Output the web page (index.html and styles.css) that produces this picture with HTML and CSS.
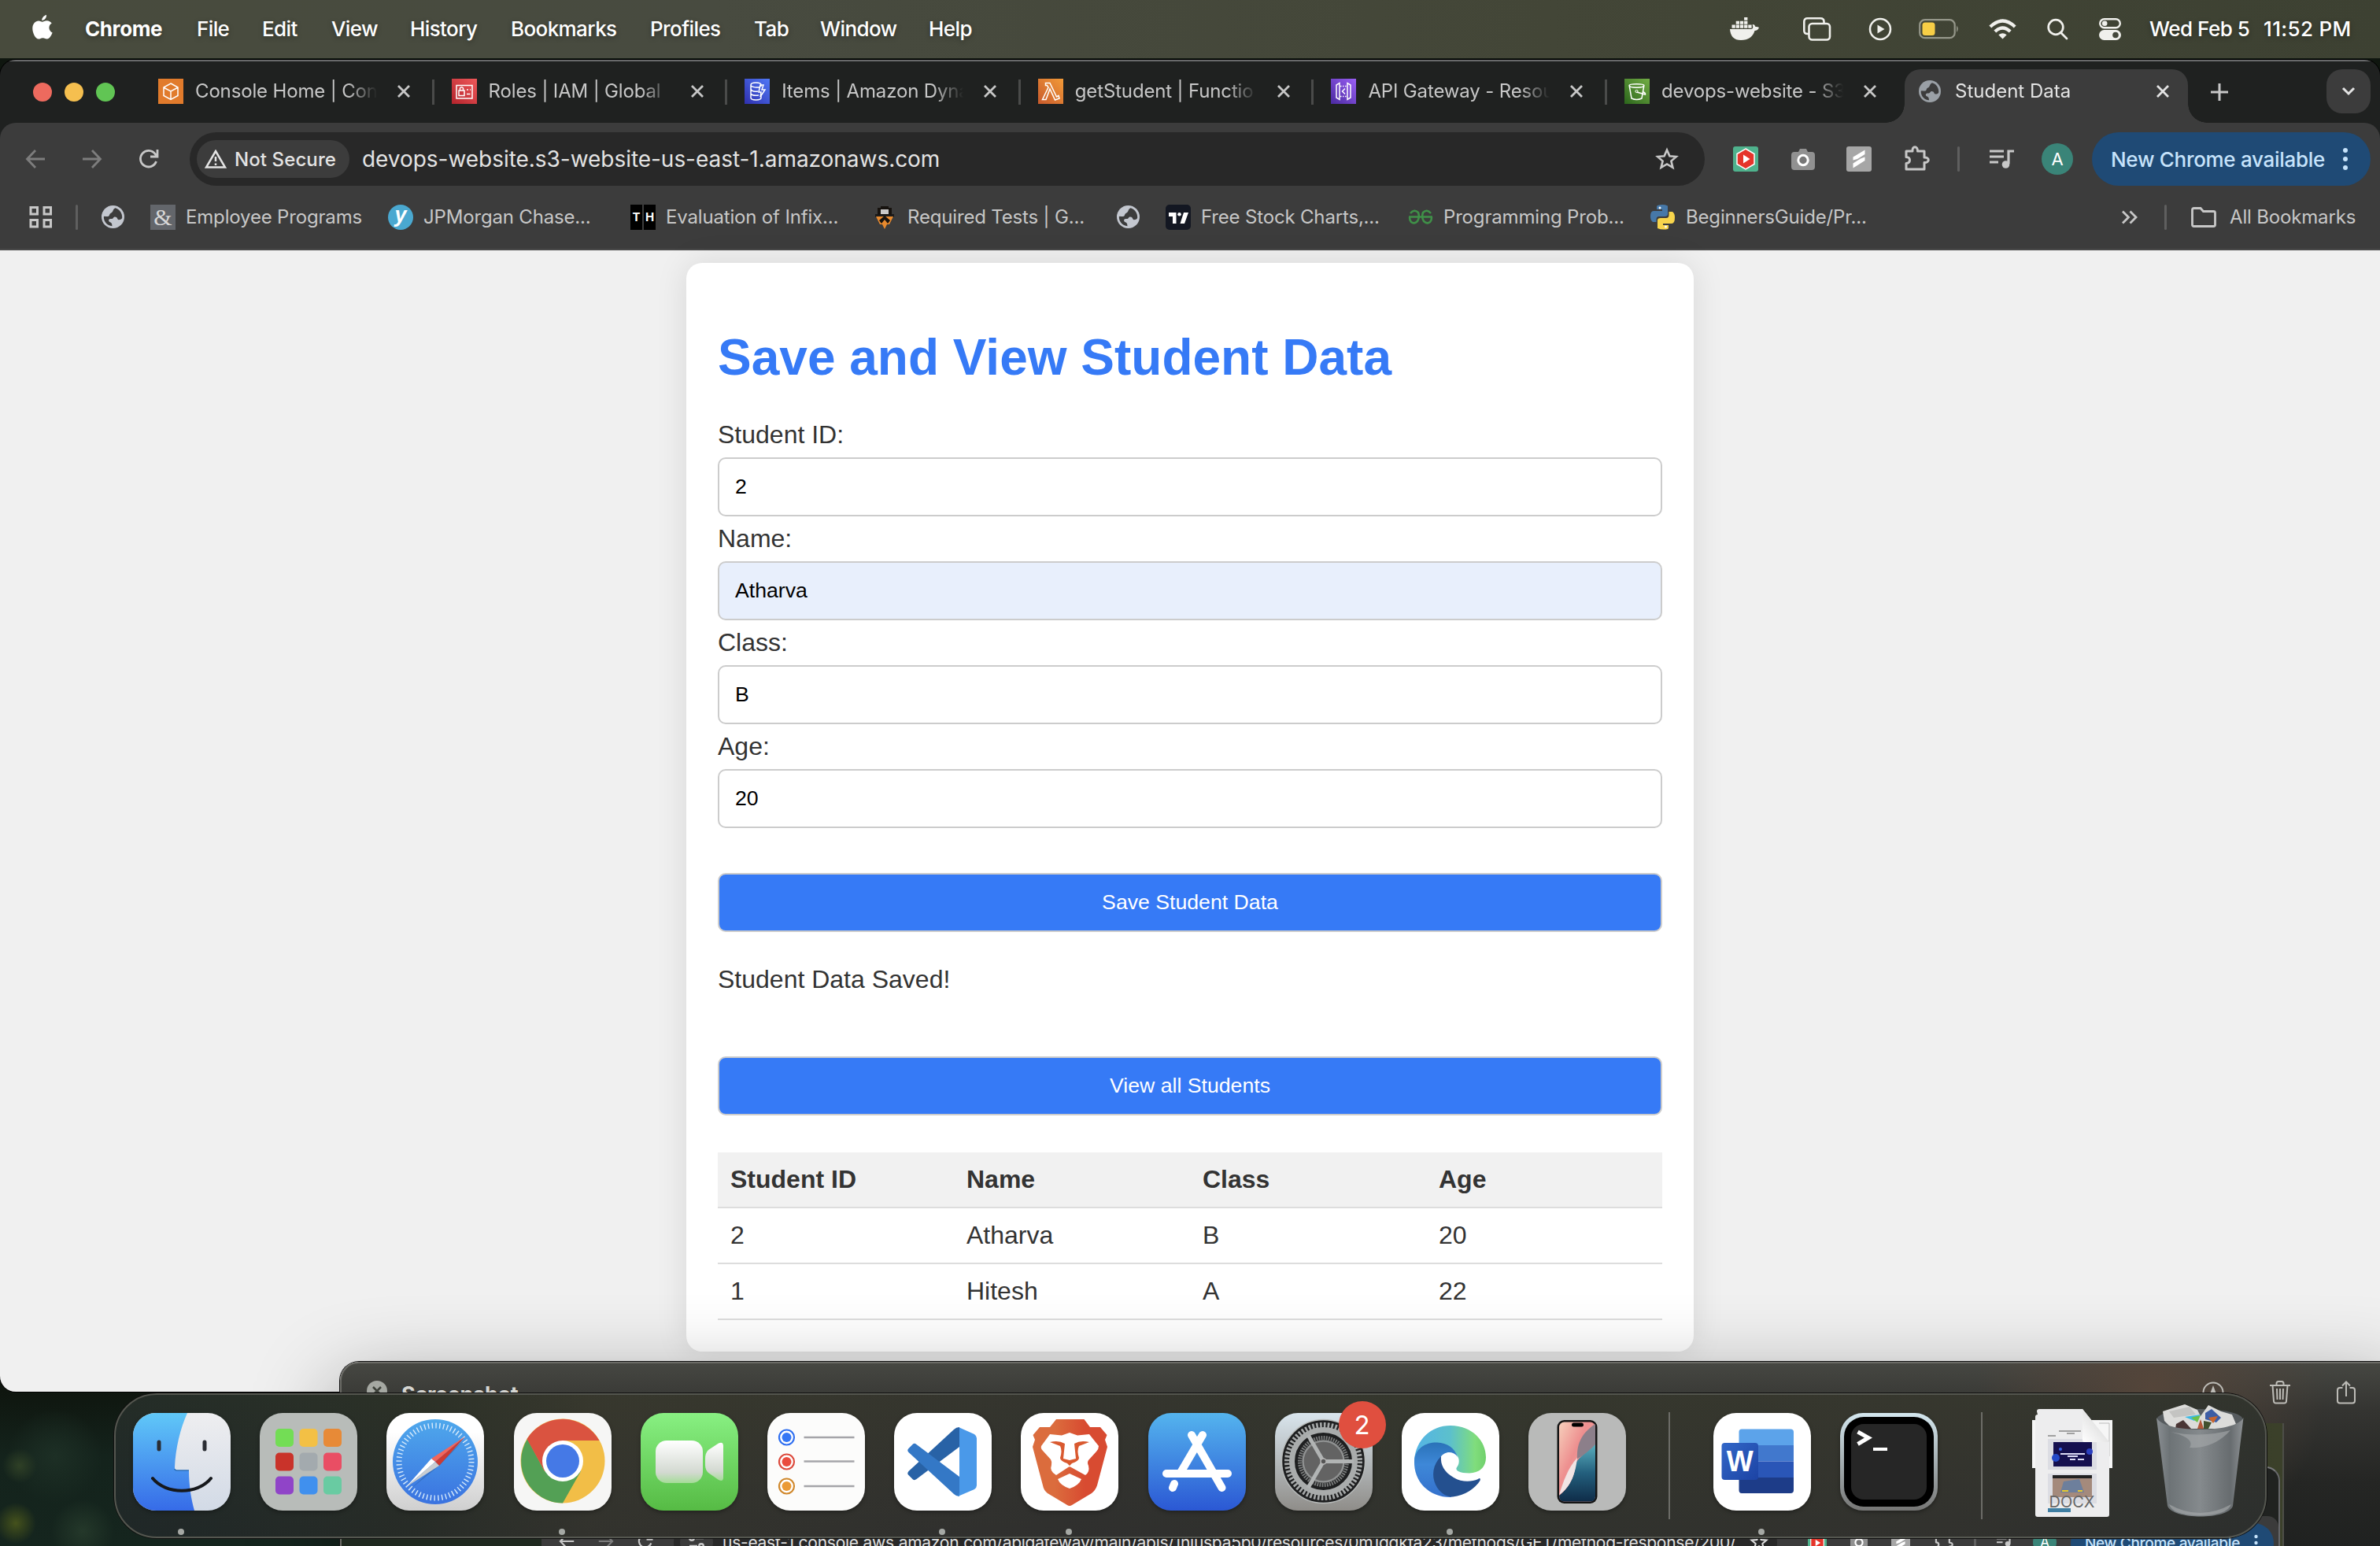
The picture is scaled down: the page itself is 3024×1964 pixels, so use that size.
FILE: index.html
```html
<!DOCTYPE html>
<html lang="en">
<head>
<meta charset="utf-8">
<title>Student Data</title>
<link rel="stylesheet" href="styles.css">
</head>
<body>
<svg width="0" height="0" class="defs" aria-hidden="true">
  <defs>
    <symbol id="globe" viewBox="0 0 28 28"><circle cx="14" cy="14" r="14" fill="currentColor"/><path d="M17 3.2C13 5 15 8 11.500 9.500C9 10.500 10.500 13 8 13.500C5.500 14 3 12.500 2.700 14C2.700 20 7 25 13 25.300C13 22 12 21 9.500 20C8 18 9 16.500 12 16.500C15 16.500 14 14 16.500 14C20 14 19 17.500 21 17.500C23.500 17.500 25 17 25.300 15C25.500 9.500 22 4.500 17 3.200Z" fill="#3c3c3c" fill-rule="evenodd"/></symbol>
    <symbol id="close" viewBox="0 0 18 18"><path d="M2 2L16 16M16 2L2 16" stroke="currentColor" stroke-width="2.800"/></symbol>
    <symbol id="star" viewBox="0 0 30 30"><path d="M15 3.500L18.400 11.300L26.800 12L20.400 17.600L22.400 25.900L15 21.500L7.600 25.900L9.600 17.600L3.200 12L11.600 11.300Z" fill="none" stroke="currentColor" stroke-width="2.600"/></symbol>
    <symbol id="back" viewBox="0 0 26 26"><path d="M13 2L2.500 13L13 24M2.500 13H25" fill="none" stroke="currentColor" stroke-width="2.800"/></symbol>
    <symbol id="reload" viewBox="0 0 26 26"><path d="M22.500 16A10.300 10.300 0 1 1 21 6.500L23.500 9M24 1V10H15" fill="none" stroke="currentColor" stroke-width="2.800"/></symbol>
    <symbol id="puzzle" viewBox="0 0 34 34"><path d="M4 8H12C11 1 19 1 18.500 8H27V16C34 15.500 34 23 27 22.500V31H4V23.500C10 23 10 15.500 4 15.500Z" fill="none" stroke="currentColor" stroke-width="3" stroke-linejoin="round"/></symbol>
    <symbol id="music" viewBox="0 0 32 24"><path d="M0 2H18M0 9H18M0 16H11" stroke="currentColor" stroke-width="3"/><path d="M24 18V2H31" fill="none" stroke="currentColor" stroke-width="3.200"/><circle cx="20.500" cy="19" r="4.800" fill="currentColor"/></symbol>
    <symbol id="blocker" viewBox="0 0 32 32"><rect width="32" height="32" rx="3" fill="#4fb28d"/><path d="M16 3L27 9.500V22.500L16 29L5 22.500V9.500Z" fill="#e5352b" stroke="#fff" stroke-width="1.500"/><path d="M13 10.500L21.500 16L13 21.500Z" fill="#fff"/></symbol>
    <symbol id="camera" viewBox="0 0 30 28"><path d="M9 5L11 1H19L21 5H26Q30 5 30 9V24Q30 28 26 28H4Q0 28 0 24V9Q0 5 4 5Z" fill="#919191"/><circle cx="15" cy="15.500" r="6.200" fill="#777" stroke="#fff" stroke-width="3"/></symbol>
    <symbol id="stripes" viewBox="0 0 32 32"><rect width="32" height="32" rx="3" fill="#a6a6a6"/><path d="M8.500 13.500L23.500 4.500V10L14 16L8.500 17.500ZM8.500 21.500L18 15.500L23.500 13.500V18L8.500 27.500Z" fill="#fff"/></symbol>
    <linearGradient id="gOrange" x1="0" y1="1" x2="1" y2="0"><stop offset="0" stop-color="#c85a2c"/><stop offset="1" stop-color="#f29a38"/></linearGradient>
    <linearGradient id="gRed" x1="0" y1="1" x2="1" y2="0"><stop offset="0" stop-color="#b3242c"/><stop offset="1" stop-color="#f0585a"/></linearGradient>
    <linearGradient id="gBlue" x1="0" y1="1" x2="1" y2="0"><stop offset="0" stop-color="#2f30ae"/><stop offset="1" stop-color="#5078f6"/></linearGradient>
    <linearGradient id="gPurple" x1="0" y1="1" x2="1" y2="0"><stop offset="0" stop-color="#4a2aa0"/><stop offset="1" stop-color="#9a5ff5"/></linearGradient>
    <linearGradient id="gGreen" x1="0" y1="1" x2="1" y2="0"><stop offset="0" stop-color="#2c661c"/><stop offset="1" stop-color="#72ad45"/></linearGradient>
    <linearGradient id="finderL" x1="0" y1="0" x2="0" y2="1"><stop offset="0" stop-color="#60c8f8"/><stop offset="1" stop-color="#366be8"/></linearGradient>
    <linearGradient id="finderR" x1="0" y1="0" x2="0" y2="1"><stop offset="0" stop-color="#eeeef0"/><stop offset="1" stop-color="#d2dae6"/></linearGradient>
    <linearGradient id="safariBg" x1="0" y1="0" x2="0" y2="1"><stop offset=".2" stop-color="#fff"/><stop offset="1" stop-color="#cfcfcf"/></linearGradient>
    <linearGradient id="safariDial" x1="0" y1="0" x2="0" y2="1"><stop offset="0" stop-color="#4fa8ec"/><stop offset="1" stop-color="#3a72e0"/></linearGradient>
    <linearGradient id="ftBg" x1="0" y1="0" x2="0" y2="1"><stop offset="0" stop-color="#88f082"/><stop offset="1" stop-color="#56bb44"/></linearGradient>
    <linearGradient id="ftCam" x1="0" y1="0" x2="0" y2="1"><stop offset="0" stop-color="#fff"/><stop offset=".75" stop-color="#d3d9d1"/><stop offset="1" stop-color="#a5dc98"/></linearGradient>
    <linearGradient id="brave" x1="0" y1="0" x2="1" y2="0"><stop offset=".3" stop-color="#db6c3d"/><stop offset=".7" stop-color="#d84b31"/></linearGradient>
    <linearGradient id="store" x1="0" y1="0" x2="0" y2="1"><stop offset="0" stop-color="#54b4ee"/><stop offset="1" stop-color="#2b58d4"/></linearGradient>
    <linearGradient id="gearBg" x1="0" y1="0" x2="0" y2="1"><stop offset="0" stop-color="#d9e5ed"/><stop offset="1" stop-color="#8f8d89"/></linearGradient>
    <linearGradient id="edgeTop" x1="0" y1="0" x2="1" y2="0"><stop offset="0" stop-color="#54b4e6"/><stop offset=".5" stop-color="#5cc0cc"/><stop offset=".85" stop-color="#80dd7c"/><stop offset="1" stop-color="#70d06c"/></linearGradient>
    <linearGradient id="edgeMid" x1="0" y1="0" x2="0" y2="1"><stop offset="0" stop-color="#2a72b8"/><stop offset=".4" stop-color="#3e88d8"/><stop offset="1" stop-color="#3470cc"/></linearGradient>
    <linearGradient id="pink" x1="0" y1="0" x2="1" y2="1"><stop offset="0" stop-color="#f6d0bc"/><stop offset=".4" stop-color="#ee8f8f"/><stop offset="1" stop-color="#f0b0b0"/></linearGradient>
    <linearGradient id="teal" x1="0" y1="0" x2="0" y2="1"><stop offset="0" stop-color="#5aaebd"/><stop offset=".5" stop-color="#235f7d"/><stop offset="1" stop-color="#0f2c48"/></linearGradient>
    <linearGradient id="wordBadge" x1="0" y1="0" x2="1" y2="1"><stop offset="0" stop-color="#3267c8"/><stop offset="1" stop-color="#1c43a4"/></linearGradient>
    <linearGradient id="termFrame" x1="0" y1="0" x2="0" y2="1"><stop offset="0" stop-color="#d3e6ee"/><stop offset="1" stop-color="#767675"/></linearGradient>
    <linearGradient id="bin" x1="0" y1="0" x2="1" y2="0"><stop offset="0" stop-color="#8a8f93"/><stop offset=".15" stop-color="#6d7376"/><stop offset=".5" stop-color="#858a8d"/><stop offset=".85" stop-color="#676c6f"/><stop offset="1" stop-color="#8d9194"/></linearGradient>
    <linearGradient id="curl" x1="0" y1="1" x2="1" y2="0"><stop offset="0" stop-color="#fff"/><stop offset=".5" stop-color="#e6e6e6"/><stop offset="1" stop-color="#bbb"/></linearGradient>
  </defs>
</svg>

<div class="desktop">
  <header class="menubar">
    <nav class="menus">
      <svg class="apple" viewBox="0 0 26 31"><path d="M18 0C18.300 3.500 15.500 7 12.300 6.900C12 3.700 15 .6 18 0ZM12.800 8.800C14 8.800 16 7 18.700 7.200C21 7.300 23.300 8.400 24.700 10.500C19.800 13.600 20.600 20.300 25.600 22.400C24.400 25.800 21.700 30.400 18.700 30.500C16.600 30.500 16 29.200 13.400 29.200C10.800 29.200 10 30.500 8 30.600C4.300 30.700 .3 23.300 .3 17.300C.3 11 4.200 7.500 8 7.500C10.200 7.500 11.800 8.800 12.800 8.800Z" fill="#fff"/></svg>
      <span class="app">Chrome</span><span>File</span><span>Edit</span><span>View</span><span>History</span><span>Bookmarks</span><span>Profiles</span><span>Tab</span><span>Window</span><span>Help</span>
    </nav>
    <div class="status">
      <svg width="38" height="30" viewBox="0 0 38 30" fill="#f0f0ec"><path d="M0 15H27C30 15 29.500 11 28.500 9.500Q31 8 32.500 12Q35 11.500 37 13Q35.500 17 31.500 17Q28 29 14 29Q1 29 0 15Z"/><path d="M2.500 9.500h4.300v4.300h-4.300zM7.700 9.500h4.300v4.300h-4.300zM12.900 9.500h4.300v4.300h-4.300zM18.100 9.500h4.300v4.300h-4.300zM23.300 9.500h4.300v4.300h-4.300zM7.700 4.700h4.300v4h-4.300zM12.900 4.700h4.300v4h-4.300zM18.100 4.700h4.300v4h-4.300zM18.100 0h4.300v3.800h-4.300z"/></svg>
      <svg width="36" height="30" viewBox="0 0 36 30" fill="none" stroke="#f0f0ec" stroke-width="2.600"><path d="M7 21H5.500Q1.300 21 1.300 17V5.500Q1.300 1.300 5.500 1.300H22Q26.500 1.300 26.500 5.500V7"/><rect x="7.500" y="8" width="26.500" height="20.500" rx="4"/></svg>
      <svg width="30" height="30" viewBox="0 0 30 30"><circle cx="15" cy="15" r="13" fill="none" stroke="#f0f0ec" stroke-width="2.500"/><path d="M11.500 9.500L20.500 15L11.500 20.500Z" fill="#f0f0ec"/></svg>
      <svg width="52" height="26" viewBox="0 0 52 26"><rect x="1.200" y="1.200" width="44.500" height="23" rx="6.500" fill="none" stroke="#95978a" stroke-width="2.200"/><rect x="4.500" y="4.500" width="16" height="16.500" rx="3.500" fill="#f7ce46"/><path d="M48 8.500Q51.500 12.700 48 17Z" fill="#95978a"/></svg>
      <svg width="35" height="27" viewBox="0 0 35 27" fill="none" stroke="#f0f0ec" stroke-width="4.200"><path d="M1.800 10Q17.500-5 33.200 10"/><path d="M7.800 16Q17.500 7 27.200 16"/><path d="M17.500 25.500L12.300 20.300Q17.500 16 22.700 20.300Z" fill="#f0f0ec" stroke="none"/></svg>
      <svg width="27" height="28" viewBox="0 0 27 28" fill="none" stroke="#f0f0ec" stroke-width="2.700"><circle cx="11" cy="11.500" r="9.300"/><path d="M17.500 18.500L25 26" stroke-linecap="round"/></svg>
      <svg width="28" height="28" viewBox="0 0 28 28"><rect x="1.200" y="1.200" width="25.600" height="11" rx="5.500" fill="none" stroke="#f0f0ec" stroke-width="2.400"/><circle cx="7.200" cy="6.700" r="3.300" fill="#f0f0ec"/><rect y="15" width="28" height="13" rx="6.500" fill="#f0f0ec"/><circle cx="21" cy="21.500" r="3.800" fill="#43473a"/></svg>
      <span class="date">Wed Feb 5</span><span class="time">11:52 PM</span>
    </div>
  </header>

  <main class="browser">
    <div class="tabstrip">
      <div class="lights"><i class="red"></i><i class="yellow"></i><i class="green"></i></div>
      <div class="tabs">
        <div class="tab"><svg class="fav" viewBox="0 0 32 32"><rect width="32" height="32" fill="#e17b2c"/><path d="M16 6L25 11V21.500L16 26.500L7 21.500V11ZM7.500 11.500L16 16L24.500 11.500M16 16V26" fill="none" stroke="#fff" stroke-width="1.500"/></svg><span>Console Home | Con</span><svg class="x"><use href="#close"/></svg></div>
        <div class="tab"><svg class="fav" viewBox="0 0 32 32"><rect width="32" height="32" fill="url(#gRed)"/><path d="M6 8.500H26V25H6ZM9 15H16V21.500H9ZM10.500 15V12Q12.500 9.500 14.500 12V15M19 14H21M19 19.500H23.500M23 14H24" fill="none" stroke="#fff" stroke-width="1.500"/></svg><span>Roles | IAM | Global</span><svg class="x"><use href="#close"/></svg></div>
        <div class="tab"><svg class="fav" viewBox="0 0 32 32"><rect width="32" height="32" fill="url(#gBlue)"/><path d="M8 8C8 4 21 4 21 8V10M8 8C8 11 18 12 20 10M8 8V24C8 28 21 28 21 24V21M8 13Q9 17 17 16M8 19Q10 22 18 21M24 8H20L18 17H21L20 23L26 14H22Z" fill="none" stroke="#fff" stroke-width="1.500"/></svg><span>Items | Amazon Dyna</span><svg class="x"><use href="#close"/></svg></div>
        <div class="tab"><svg class="fav" viewBox="0 0 32 32"><rect width="32" height="32" fill="url(#gOrange)"/><path d="M9.500 5.500H15L23.500 23L26 21.500L27 25L21.500 27L15 13L10 26.500H5.500L13 11L11.500 8.500H9.500Z" fill="none" stroke="#fff" stroke-width="1.500"/></svg><span>getStudent | Functio</span><svg class="x"><use href="#close"/></svg></div>
        <div class="tab"><svg class="fav" viewBox="0 0 32 32"><rect width="32" height="32" fill="url(#gPurple)"/><path d="M11 5.500V26.500L7 24V8ZM21 5.500V26.500L25 24V8ZM18 12.500L14.500 16L18 19.500" fill="none" stroke="#fff" stroke-width="1.500"/><path d="M12 9.500H20M12 22.500H20" stroke="#fff" stroke-width="1.500" stroke-dasharray="1.500 1.500"/></svg><span>API Gateway - Resou</span><svg class="x"><use href="#close"/></svg></div>
        <div class="tab"><svg class="fav" viewBox="0 0 32 32"><rect width="32" height="32" fill="url(#gGreen)"/><path d="M6 8.500C6 6 25 6 25 8.500C25 12 6 12 6 8.500ZM6.200 9L9 25Q15.500 28 22 25L24.800 9M15.500 17L26.500 20Q27 18 23.500 16.500" fill="none" stroke="#fff" stroke-width="1.500"/><circle cx="15.500" cy="16" r="1.600" fill="none" stroke="#fff"/></svg><span>devops-website - S3</span><svg class="x"><use href="#close"/></svg></div>
      </div>
      <div class="tab active"><svg class="ficon"><use href="#globe"/></svg><span>Student Data</span><svg class="x"><use href="#close"/></svg></div>
      <svg class="plus" viewBox="0 0 22 22"><path d="M11 0V22M0 11H22" stroke="#c7c7c7" stroke-width="3"/></svg>
      <div class="tabsearch"><svg width="18" height="12" viewBox="0 0 18 12"><path d="M2 2L9 9L16 2" fill="none" stroke="#e3e3e3" stroke-width="3"/></svg></div>
    </div>

    <div class="toolbar">
      <svg class="tb dim"><use href="#back"/></svg>
      <svg class="tb dim flip"><use href="#back"/></svg>
      <svg class="tb"><use href="#reload"/></svg>
      <div class="omnibox">
        <div class="chip"><svg width="28" height="24" viewBox="0 0 28 24"><path d="M14 2L26 22.500H2ZM14 9V15M14 17.500V20" fill="none" stroke="#e3e3e3" stroke-width="2.500"/></svg><span>Not Secure</span></div>
        <span class="url">devops-website.s3-website-us-east-1.amazonaws.com</span>
        <svg class="star"><use href="#star"/></svg>
      </div>
      <div class="exts">
        <svg width="32" height="32"><use href="#blocker"/></svg>
        <svg width="30" height="28"><use href="#camera"/></svg>
        <svg width="32" height="32"><use href="#stripes"/></svg>
        <svg width="34" height="34" class="pz"><use href="#puzzle"/></svg>
        <i class="vsep"></i>
        <svg width="32" height="24" class="ms"><use href="#music"/></svg>
        <b class="avatar">A</b>
      </div>
      <div class="update"><span>New Chrome available</span><svg width="6" height="30" viewBox="0 0 6 30" fill="#c6e3fb"><circle cx="3" cy="4" r="3"/><circle cx="3" cy="15" r="3"/><circle cx="3" cy="26" r="3"/></svg></div>
    </div>

    <div class="bookmarks">
      <svg width="30" height="30" viewBox="0 0 30 30" fill="none" stroke="#c7c7c7" stroke-width="3"><path d="M2 2.500h8.500v8.500h-8.500zM19 2.500h8.500v8.500h-8.500zM2 18.500h8.500v8.500h-8.500zM19 18.500h8.500v8.500h-8.500z"/></svg>
      <i class="vsep"></i>
      <svg width="29" height="29" class="g"><use href="#globe"/></svg>
      <div class="bm"><b class="amp">&amp;</b><span>Employee Programs</span></div>
      <div class="bm"><b class="jp">y</b><span>JPMorgan Chase...</span></div>
      <div class="bm"><b class="th"><i>T</i><i>H</i></b><span>Evaluation of Infix...</span></div>
      <div class="bm"><svg width="32" height="32" viewBox="0 0 32 32"><path d="M4 12H28V16H4Z" fill="#1b1b1b"/><path d="M5 15H27L22 25H19L16 31L13 25H10Z" fill="#e88a2e"/><path d="M9 20L16 14L23 20L20 24L16 19L12 24Z" fill="#17130f"/><path d="M7 4H11V2H21V4H25V13H7Z" fill="#17130f"/><path d="M11 6H21V12H11Z" fill="#c8c8c8"/></svg><span>Required Tests | G...</span></div>
      <svg width="29" height="29" class="g"><use href="#globe"/></svg>
      <div class="bm"><svg width="32" height="32" viewBox="0 0 32 32"><rect width="32" height="32" rx="5" fill="#131722"/><path d="M4 10H13.500V24H9V15H4ZM23 10H29L24 24H18.500Z" fill="#fff"/><circle cx="17.500" cy="12.300" r="2.300" fill="#fff"/></svg><span>Free Stock Charts,...</span></div>
      <div class="bm"><svg width="32" height="20" viewBox="0 0 32 20" fill="none" stroke="#3f9048" stroke-width="2.600"><path d="M1 9.500H31M3 5Q8-1 13 4Q15 10 12 15Q8 19 4 16Q2 14 2 10M29 5Q24-1 19 4Q17 10 20 15Q24 19 28 16Q30 14 30 10"/></svg><span>Programming Prob...</span></div>
      <div class="bm"><svg width="32" height="32" viewBox="0 0 32 32"><path d="M9 1Q16-1 22 1.500V12Q22 15 18 15H11Q7.500 15 7.500 19V22H3Q0 20 0 15Q0 8 4 8H15V6H8V3Q8 1.500 9 1Z" fill="#4678a8"/><path d="M22 31Q15 32.500 9 30V20Q9 17 13 17H20Q23.500 17 23.500 13V9H28Q31 11 31 16Q31 24 27 24H16V26H23V29Q23 30.500 22 31Z" fill="#f8d54c"/><circle cx="12" cy="4" r="1.500" fill="#fff"/><circle cx="19.500" cy="28" r="1.500" fill="#fff"/></svg><span>BeginnersGuide/Pr...</span></div>
      <svg width="22" height="18" viewBox="0 0 22 18" fill="none" stroke="#c7c7c7" stroke-width="2.800"><path d="M2 1.500L9.500 9L2 16.500M11.500 1.500L19 9L11.500 16.500"/></svg>
      <i class="vsep"></i>
      <div class="bm"><svg width="32" height="26" viewBox="0 0 32 26" fill="none" stroke="#c7c7c7" stroke-width="2.800"><path d="M1.500 3.500Q1.500 1.500 3.500 1.500H12L15.500 5.500H28.500Q30.500 5.500 30.500 7.500V22.500Q30.500 24.500 28.500 24.500H3.500Q1.500 24.500 1.500 22.500Z"/></svg><span>All Bookmarks</span></div>
    </div>

    <div class="page">
      <section class="card">
        <h1>Save and View Student Data</h1>
        <label>Student ID:</label><div class="field">2</div>
        <label>Name:</label><div class="field autofill">Atharva</div>
        <label>Class:</label><div class="field">B</div>
        <label>Age:</label><div class="field">20</div>
        <div class="field button save">Save Student Data</div>
        <p>Student Data Saved!</p>
        <div class="field button">View all Students</div>
        <table>
          <thead><tr><th>Student ID</th><th>Name</th><th>Class</th><th>Age</th></tr></thead>
          <tbody>
            <tr><td>2</td><td>Atharva</td><td>B</td><td>20</td></tr>
            <tr><td>1</td><td>Hitesh</td><td>A</td><td>22</td></tr>
          </tbody>
        </table>
      </section>
    </div>
  </main>

  <aside class="preview">
    <div class="preview-head">
      <svg width="26" height="26" viewBox="0 0 26 26"><circle cx="13" cy="13" r="13" fill="#a5a8a2"/><path d="M8 8L18 18M18 8L8 18" stroke="#3c4039" stroke-width="2.500"/></svg>
      <b>Screenshot</b>
      <svg width="28" height="30" viewBox="0 0 28 30"><circle cx="14" cy="15" r="12.500" fill="none" stroke="#bdbcb7" stroke-width="2"/><path d="M14 6L18.500 18H9.500Z" fill="#bdbcb7"/></svg>
      <svg width="26" height="30" viewBox="0 0 26 30" fill="none" stroke="#bdbcb7" stroke-width="2"><path d="M0 6H26M3.500 6L5 26Q5.200 28.500 7.500 28.500H18.500Q20.800 28.500 21 26L22.500 6M8.500 6V3.500Q8.500 1 11 1H15Q17.500 1 17.500 3.500V6M9 10L9.500 24M13 10V24M17 10L16.500 24"/></svg>
      <svg width="24" height="30" viewBox="0 0 24 30" fill="none" stroke="#bdbcb7" stroke-width="2"><path d="M7.500 9H4Q1 9 1 12V25.500Q1 28.500 4 28.500H20Q23 28.500 23 25.500V12Q23 9 20 9H16.500M12 20V1.500M7 6.500L12 1.500L17 6.500"/></svg>
    </div>
    <div class="shot">
      <div class="shot-window">
        <div class="shot-bar">
          <svg width="20" height="20"><use href="#back"/></svg>
          <svg width="20" height="20" class="dim flip"><use href="#back"/></svg>
          <svg width="20" height="20"><use href="#reload"/></svg>
          <div class="shot-omni"><i class="tune"><svg width="20" height="18" viewBox="0 0 20 18" fill="none" stroke="#c7c7c7" stroke-width="2.400"><circle cx="4" cy="4" r="2.800"/><path d="M9 4H19M1 14H11"/><circle cx="16" cy="14" r="2.800"/></svg></i><span>us-east-1.console.aws.amazon.com/apigateway/main/apis/1hjuspa5b0/resources/0m1gdkfa23/methods/GET/method-response/200/...</span><svg width="24" height="24"><use href="#star"/></svg></div>
          <svg width="24" height="24"><use href="#blocker"/></svg>
          <svg width="22" height="21"><use href="#camera"/></svg>
          <svg width="24" height="24"><use href="#stripes"/></svg>
          <svg width="25" height="25"><use href="#puzzle"/></svg>
          <i class="vsep"></i>
          <svg width="22" height="17"><use href="#music"/></svg>
          <b class="avatar">A</b>
          <div class="update"><span>New Chrome available</span><svg width="5" height="22" viewBox="0 0 6 30" fill="#c6e3fb"><circle cx="3" cy="4" r="3"/><circle cx="3" cy="15" r="3"/><circle cx="3" cy="26" r="3"/></svg></div>
        </div>
      </div>
    </div>
  </aside>

  <footer class="dock">
    <div class="app-icon run"><svg viewBox="0 0 124 124"><rect width="124" height="124" fill="url(#finderR)"/><path d="M0 0H69C60 20 54 45 53 69Q53 73 56 73H71C71 92 74 110 78 124H0Z" fill="url(#finderL)"/><path d="M33 37V46M91 37V46" stroke="#2a2d33" stroke-width="5" stroke-linecap="round"/><path d="M25 83C42 104 82 104 99 83" fill="none" stroke="#16181c" stroke-width="4" stroke-linecap="round"/><path d="M53 71Q53 73 56 73H71" fill="none" stroke="#2c6fb8" stroke-width="1.500"/></svg></div>
    <div class="app-icon"><svg viewBox="0 0 124 124"><rect width="124" height="124" fill="#b8bcb9"/><g><rect x="20" y="20" width="23" height="23" rx="5" fill="#73dd55"/><rect x="50.500" y="20" width="23" height="23" rx="5" fill="#f3c045"/><rect x="81" y="20" width="23" height="23" rx="5" fill="#e78a37"/><rect x="20" y="50.500" width="23" height="23" rx="5" fill="#c9332a"/><rect x="50.500" y="50.500" width="23" height="23" rx="5" fill="#a3aaae"/><rect x="81" y="50.500" width="23" height="23" rx="5" fill="#e94e64"/><rect x="20" y="80.500" width="23" height="23" rx="5" fill="#9044c8"/><rect x="50.500" y="80.500" width="23" height="23" rx="5" fill="#4090ee"/><rect x="81" y="80.500" width="23" height="23" rx="5" fill="#69cba2"/></g></svg></div>
    <div class="app-icon"><svg viewBox="0 0 124 124"><rect width="124" height="124" fill="url(#safariBg)"/><circle cx="62" cy="62" r="54" fill="url(#safariDial)"/><circle cx="62" cy="62" r="46" fill="none" stroke="#d8ebfb" stroke-width="7" stroke-dasharray="1.400 3.418"/><path d="M29 98L67 67L99 34Z" fill="#1c3f78" opacity=".3"/><path d="M100 30L57 58L62 62Z" fill="#f2665c"/><path d="M100 30L67 67L62 62Z" fill="#cc3b33"/><path d="M25 94L57 58L62 62Z" fill="#fff"/><path d="M25 94L67 67L62 62Z" fill="#c9cdd0"/></svg></div>
    <div class="app-icon run"><svg viewBox="0 0 124 124"><rect width="124" height="124" fill="#f6f6f5"/><circle cx="62" cy="61" r="53.500" fill="#f2be47"/><path d="M17 33A53.500 53.500 0 0 0 62 114.500L85 74L62 61L39 74Z" fill="#53a055"/><path d="M16.500 33A53.500 53.500 0 0 1 108.500 35H62V61L39 74Z" fill="#da5340"/><circle cx="62" cy="61" r="26" fill="#fff"/><circle cx="62" cy="61" r="21" fill="#4579e6"/></svg></div>
    <div class="app-icon"><svg viewBox="0 0 124 124"><rect width="124" height="124" fill="url(#ftBg)"/><rect x="19" y="35" width="60" height="54" rx="14" fill="url(#ftCam)"/><path d="M82 58Q82 51 86 47L99 38.500Q105 36 105 42V82Q105 88 99 85L86 76Q82 72 82 66Z" fill="url(#ftCam)"/></svg></div>
    <div class="app-icon"><svg viewBox="0 0 124 124"><rect width="124" height="124" fill="#fcfcfb"/><g fill="#fff" stroke-width="2.200"><circle cx="24.500" cy="31" r="9.500" stroke="#2f6ff0"/><circle cx="24.500" cy="62" r="9.500" stroke="#dc4a3c"/><circle cx="24.500" cy="93" r="9.500" stroke="#d0882c"/></g><circle cx="24.500" cy="31" r="6" fill="#3577f5"/><circle cx="24.500" cy="62" r="6" fill="#ea4c3e"/><circle cx="24.500" cy="93" r="6" fill="#eb9a35"/><path d="M46.500 31H110.500M46.500 61.500H110.500M46.500 93H110.500" stroke="#a5a5a9" stroke-width="2.400"/></svg></div>
    <div class="app-icon run"><svg viewBox="0 0 124 124"><rect width="124" height="124" fill="#fff"/><path d="M83 18Q79 18 76 21L18.500 74Q16 77 18.500 79L24 84.500Q26 86 28.500 84L83 43Z" fill="#2862a6"/><path d="M28.500 40Q26 38 24 39.500L18.500 45Q16 47.500 18.500 50L76 103Q79 106 83 106V81Z" fill="#3478c6"/><path d="M83 18.500L102 27Q105 29 105 32V92Q105 95 102 97L81 106Q83 104 83 101Z" fill="#4a99e9"/></svg></div>
    <div class="app-icon run"><svg viewBox="0 0 124 124"><rect width="124" height="124" fill="#fff"/><path d="M45 8H80.500L88 18H101L109.500 28L107 34L110 43L97 92Q95 98 90 102L65 117Q62 119 59 117L34 102Q29 98 28 92L15 43L18 34L15.500 28L24 18H37Z" fill="url(#brave)"/><path d="M37 27L52 28.500L62 25L72 28.500L87 27L99 42Q99 46 96 49L86 60Q84 63 86 67Q88 75 82 79L63 68.500Q62 68 61 68.500L45 79Q36 74 39 66Q40 62 38 59L28 48Q25 45 26 42Z" fill="#fff"/><path d="M62 77L77 84Q74 92 62 96Q50 92 47 84Z" fill="#fff"/><path d="M37 37Q48 34 56 39L54 58L62 60L70 58L68 39Q76 34 87 37L74 42Q71 48 74 57Q74 61 65 64L62 67L59 64Q50 61 50 57Q53 48 50 42Z" fill="#d9592f"/></svg></div>
    <div class="app-icon"><svg viewBox="0 0 124 124"><rect width="124" height="124" fill="url(#store)"/><g stroke="#fff" stroke-width="10" stroke-linecap="round"><path d="M55 28L93.500 95M69 28L42 74M33 90L31 95M23 77H101"/></g></svg></div>
    <div class="app-icon"><svg viewBox="0 0 124 124"><rect width="124" height="124" fill="url(#gearBg)"/><circle cx="61.500" cy="61.500" r="53" fill="#1e1f20" stroke="#b7bab9" stroke-width="1.500"/><circle cx="61.500" cy="61.500" r="46" fill="none" stroke="#a5a8a8" stroke-width="7" stroke-dasharray="2.600 2.217"/><circle cx="61.500" cy="61.500" r="40" fill="none" stroke="#a9acac" stroke-width="7"/><circle cx="61.500" cy="61.500" r="30" fill="none" stroke="#7a7c7c" stroke-width="5" stroke-dasharray="1.800 1.340"/><circle cx="61.500" cy="61.500" r="26" fill="#636363" stroke="#8f9191" stroke-width="2.500"/><path d="M61.500 61.500H100M61.500 61.500L42 28M61.500 61.500L42 95" stroke="#b1b4b4" stroke-width="5"/><circle cx="61.500" cy="61.500" r="3.500" fill="#555" stroke="#b5b5b5" stroke-width="1.500"/></svg><b class="badge">2</b></div>
    <div class="app-icon run"><svg viewBox="0 0 124 124"><rect width="124" height="124" fill="#fff"/><path d="M16 60C18 34 37 16 62 16C90 16 107 36 107 56C107 70 98 76 86 76.500C74 76.500 67 73 70 69C76 62 72 50 62 50Q46 34 16 60Z" fill="url(#edgeTop)"/><path d="M16 61C17 44 32 37 45 37.500C58 38 67 44 71 56C66 48 54 48 49 57C40 72 44 96 64 107C36 108 15 88 16 61Z" fill="url(#edgeMid)"/><path d="M50 55C39 66 38 80 43 91C48 102 58 107 65 106.500C80 105 93 96 99.500 86C100.500 83 99 82 97 84C88 88 76 88 66 82C54 75 49 66 50 55Z" fill="#24508f"/></svg></div>
    <div class="app-icon"><svg viewBox="0 0 124 124"><rect width="124" height="124" fill="#b9bab9"/><rect x="36.500" y="9" width="51" height="106" rx="9" fill="#141414"/><rect x="39" y="11.500" width="46" height="101" rx="6.500" fill="url(#pink)"/><path d="M85 14C66 26 61 42 62 58L85 46Z" fill="#8c7f8a"/><path d="M85 40C72 54 62 56 60 66C58 84 50 96 39 105Q39 112.500 46 112.500H78Q85 112.500 85 106Z" fill="url(#teal)"/><path d="M62 57C50 70 44 88 39 104C54 94 60 76 62 57Z" fill="#f1e4e4"/><rect x="55" y="12.500" width="15" height="5" rx="2.500" fill="#000"/></svg></div>
    <i class="divider d1"></i>
    <div class="app-icon run"><svg viewBox="0 0 124 124"><rect width="124" height="124" fill="#fff"/><path d="M36 20.500H98Q102 20.500 102 24V41H32.500V24Q32.500 20.500 36 20.500Z" fill="#5ca3ea"/><path d="M32.500 41H102V61.500H32.500Z" fill="#4178cd"/><path d="M32.500 61.500H102V82H32.500Z" fill="#2a56b7"/><path d="M32.500 82H102V98Q102 102 98 102H36Q32.500 102 32.500 98Z" fill="#1d3c88"/><rect x="10.500" y="38" width="46.500" height="47" rx="4" fill="url(#wordBadge)"/><text x="33.700" y="74" text-anchor="middle" class="wletter">W</text></svg></div>
    <div class="app-icon"><svg viewBox="0 0 124 124"><rect width="124" height="124" fill="url(#termFrame)"/><rect x="5" y="5" width="114" height="114" rx="25" fill="#000"/><rect x="14" y="14" width="96" height="96" rx="16" fill="#262626"/><path d="M22.500 24L36 31.500L22.500 39.500" fill="none" stroke="#fff" stroke-width="5"/><path d="M42 46H60" stroke="#fff" stroke-width="4"/></svg></div>
    <i class="divider d2"></i>
    <svg class="docx" width="103" height="138" viewBox="0 0 103 138"><path d="M0 14H102V75H0Z" fill="#f6f6f6"/><path d="M85 18H98V60H85" fill="none" stroke="#bbb"/><path d="M6 3Q6 0 9 0H64L98 42V134Q98 137 95 137H7Q4 137 4 134V10Q4 7 7 7Z" fill="#ededee"/><path d="M34 28H62M44 31H54M20 34H30" stroke="#888" stroke-width="1.500"/><path d="M20 38H82V77H20ZM20 82H82V120H20Z" fill="#dcdde3"/><path d="M27 42H76V73H27Z" fill="#15104f"/><path d="M36 57H67M45 60H58M48 64H55M58 64H66" stroke="#dcdcf5" stroke-width="1.800"/><circle cx="30" cy="62" r="5" fill="#2349c8"/><circle cx="73" cy="54" r="4" fill="#2b3fc0"/><circle cx="36" cy="51" r="2" fill="#3864e8"/><path d="M26 84H76V112H26Z" fill="#a48a7c"/><path d="M26 84H76V88H26Z" fill="#222"/><path d="M40 92L60 89L66 106H36Z" fill="#6d7f9c"/><path d="M38 104H46M58 104H64" stroke="#e8c92e" stroke-width="2"/><rect x="20" y="126" width="29" height="5" fill="#3f7fa3"/><text x="50.500" y="125" text-anchor="middle" class="docx-label">DOCX</text><path d="M64 0L98 42H66Q64 42 64 39Z" fill="url(#curl)"/></svg>
    <svg class="trash" width="111" height="144" viewBox="0 0 111 144"><ellipse cx="55" cy="20" rx="54.500" ry="13" fill="#565b5e"/><path d="M8 10L20 6L36 1L52 8L56 16L66 2L82 10L96 14L101 26L90 32L20 32L10 22Z" fill="#dcdcda"/><path d="M16 10L42 4L50 14L22 18Z" fill="#c4c4c2"/><path d="M36 17L56 14L48 22Z" fill="#3dbbe6"/><path d="M44 18L56 15L52 24Z" fill="#6cc04a"/><path d="M25 26L34 21L44 32H24Z" fill="#4a3635"/><path d="M62 12L70 7L82 18L76 24L62 20Z" fill="#3c5da5"/><path d="M66 18L78 16L72 25Z" fill="#c8652e"/><path d="M52 32L56 20L60 32Z" fill="#b25738"/><path d="M60 22L70 24L66 32H60Z" fill="#42502e"/><path d="M0 18C10 38 101 38 110.500 18L97 130C92 148 20 148 14 130Z" fill="url(#bin)"/><path d="M18 36Q55 44 94 34Q72 58 42 56Q50 44 18 36Z" fill="#a7aaac" opacity=".6"/><path d="M16 128Q55 150 95 128Q90 142 55 142Q20 142 16 128Z" fill="#a8acae" opacity=".6"/></svg>
  </footer>
</div>
</body>
</html>
```
FILE: styles.css
```css
* { box-sizing: border-box; }
body { margin: 0; font-family: Inter, "Liberation Sans", sans-serif; }
svg { display: block; flex: none; }
i { font-style: normal; }
.defs { position: absolute; }

.desktop {
  position: relative;
  width: 3024px;
  height: 1964px;
  overflow: hidden;
  display: flex;
  flex-direction: column;
  background:
    radial-gradient(circle at 20px 1935px, #45521c 0, transparent 26px),
    radial-gradient(circle at 25px 1862px, #2f4026 0, transparent 22px),
    radial-gradient(circle at 105px 1945px, #24382a 0, transparent 40px),
    radial-gradient(circle at 70px 1850px, #1d2f25 0, transparent 60px),
    linear-gradient(#0f160f 1768px, #14231c 1850px, #15251e 1964px);
}

/* menu bar */
.menubar {
  height: 74px;
  flex: none;
  display: flex;
  justify-content: space-between;
  background: linear-gradient(90deg, #484b3d, #484b40 30%, #434637 65%, #3d4132);
  color: #fff;
  font-size: 26px;
  line-height: 74px;
  font-weight: 500;
  white-space: nowrap;
  text-shadow: 0 2px 6px rgba(0, 0, 0, .35);
}
.menus {
  display: grid;
  grid-template-columns: 67px 142px 83px 88px 100px 128px 177px 132px 84px 138px 90px;
  padding-left: 41px;
  letter-spacing: -.6px;
}
.apple { width: 26px; height: 31px; margin-top: 19px; }
.menus .app { font-weight: 700; letter-spacing: -.4px; }
.status {
  display: grid;
  grid-template-columns: 93px 83px 64px 89px 74px 66px 64px 145px 148px;
  align-items: center;
  letter-spacing: -.5px;
}
.time { letter-spacing: .35px; }

/* browser window */
.browser {
  position: relative;
  margin-top: 2px;
  height: 1692px;
  flex: none;
  display: flex;
  flex-direction: column;
  border-radius: 20px;
  overflow: hidden;
  background: #1f2120;
  box-shadow: 0 0 0 1px #000;
}
.tabstrip {
  height: 80px;
  flex: none;
  display: flex;
  border-top: 2px solid #68696a;
  padding-left: 42px;
}
.lights { display: flex; gap: 16px; padding-top: 27px; width: 137px; }
.lights i { width: 24px; height: 24px; border-radius: 50%; }
.red { background: #ed6a5e; }
.yellow { background: #f5bf4f; }
.green { background: #61c554; }
.tabs { display: flex; width: 2241px; flex: none; }
.tab {
  width: 372.600px;
  height: 78px;
  flex: none;
  display: flex;
  align-items: center;
  padding: 0 0 2px 22px;
  color: #c7c7c7;
  font-size: 24px;
  letter-spacing: -.15px;
  background: linear-gradient(#4a4b4a, #4a4b4a) right 23px / 3px 32px no-repeat;
}
.tabs .tab:last-child { background: none; }
.tab .fav { width: 32px; height: 32px; }
.tab span {
  width: 236px;
  margin: 0 20px 0 15px;
  white-space: nowrap;
  line-height: 40px;
  -webkit-mask-image: linear-gradient(90deg, #000 82%, transparent 98%);
  mask-image: linear-gradient(90deg, #000 82%, transparent 98%);
}
.tab .x { width: 18px; height: 18px; }
.tab.active {
  position: relative;
  width: 360px;
  height: 68px;
  margin-top: 10px;
  padding: 0 0 12px 18px;
  border-radius: 20px 20px 0 0;
  background: #3c3c3c;
  color: #e3e3e3;
}
.tab.active::before, .tab.active::after {
  content: "";
  position: absolute;
  bottom: 0;
  width: 24px;
  height: 24px;
}
.tab.active::before { left: -24px; background: radial-gradient(circle at 0 0, transparent 23.500px, #3c3c3c 24px); }
.tab.active::after { right: -24px; background: radial-gradient(circle at 100% 0, transparent 23.500px, #3c3c3c 24px); }
.tab.active .ficon { width: 28px; height: 28px; color: #9aa0a6; }
.tab.active span { margin: 0 18px; width: 237px; letter-spacing: 0; }
.plus { width: 22px; height: 22px; margin: 28px 125px 0 29px; }
.tabsearch {
  width: 56px;
  height: 56px;
  margin-top: 10px;
  border-radius: 20px;
  background: #3c3c3c;
  display: grid;
  place-items: center;
}

.toolbar {
  height: 92px;
  flex: none;
  display: flex;
  align-items: center;
  padding: 0 12px 0 32px;
  background: #3c3c3c;
  border-radius: 20px 20px 0 0;
}
.tb { width: 26px; height: 26px; margin-right: 46px; color: #c7c7c7; }
.dim { color: #7d7d7d; }
.flip { transform: scaleX(-1); }
.tb:nth-child(3) { margin-right: 39px; }
.omnibox {
  width: 1925px;
  height: 68px;
  flex: none;
  display: flex;
  align-items: center;
  padding: 0 33px 0 9px;
  border-radius: 34px;
  background: #282828;
  color: #e3e3e3;
  white-space: nowrap;
}
.chip {
  width: 194px;
  height: 48px;
  display: flex;
  align-items: center;
  gap: 10px;
  padding: 0 10px;
  border-radius: 24px;
  background: #3c3c3c;
  font-size: 24px;
  font-weight: 500;
  letter-spacing: .1px;
}
.url { margin-left: 16px; flex: 1; font-size: 28px; letter-spacing: -.04px; }
.star { width: 30px; height: 30px; color: #c7c7c7; }
.exts {
  display: grid;
  grid-template-columns: 74px 70px 73px 68px 41px 66px 64px;
  align-items: center;
  margin-left: 36px;
  color: #c7c7c7;
}
.exts .pz { margin-left: -1px; margin-top: -2px; }
.vsep { width: 3px; height: 32px; border-radius: 2px; background: #5f5f5f; }
.avatar {
  width: 40px;
  height: 40px;
  border-radius: 50%;
  background: #3a8478;
  color: #fff;
  font-size: 22px;
  font-weight: 400;
  line-height: 40px;
  text-align: center;
}
.update {
  width: 354px;
  height: 68px;
  border-radius: 34px;
  background: #1f4a75;
  color: #c6e3fb;
  display: flex;
  align-items: center;
  justify-content: space-between;
  padding: 0 29px 0 24px;
  font-size: 26px;
  font-weight: 500;
  letter-spacing: -.3px;
  white-space: nowrap;
}

.bookmarks {
  height: 70px;
  flex: none;
  display: grid;
  grid-template-columns: 59px 33px 62px 302px 308px 307px 311px 62px 308px 308px 598px 55px 34px 230px;
  align-items: center;
  padding: 0 0 13px 37px;
  background: #3c3c3c;
  border-bottom: 2px solid #494949;
  color: #c7c7c7;
  font-size: 24px;
  letter-spacing: -.17px;
  white-space: nowrap;
}
.bm { display: flex; align-items: center; gap: 13px; }
.bm:last-child { gap: 17px; }
.g { color: #c3c7cf; }
.amp, .jp, .th { width: 32px; height: 32px; flex: none; text-align: center; color: #fff; line-height: 32px; letter-spacing: 0; }
.amp { background: #63666b; font: 400 30px/32px "Liberation Serif", serif; color: #d8d8d8; }
.jp { border-radius: 50%; background: #4aa8d0; font: italic 700 27px/26px "Liberation Sans", sans-serif; }
.th { display: flex; gap: 2px; font-size: 15px; }
.th i { width: 15px; background: #000; }

/* page */
.page {
  flex: 1;
  background: #f0f0f0;
  padding-top: 16px;
  font-family: "Liberation Sans", Arial, sans-serif;
  font-size: 32px;
  color: #333;
}
.card {
  width: 1280px;
  height: 1383px;
  margin: 0 auto;
  padding: 40px;
  border-radius: 20px;
  background: #fff;
  box-shadow: 0 0 40px rgba(0, 0, 0, .1);
}
h1 { margin: 43px 0 42px; font-size: 64px; line-height: 75px; color: #367af6; }
label { display: block; height: 37px; margin-bottom: 10px; line-height: 37px; }
.field {
  height: 75px;
  margin-bottom: 10px;
  padding: 0 20px;
  border: 2px solid #ccc;
  border-radius: 10px;
  font-size: 26.667px;
  line-height: 70px;
  color: #000;
}
.autofill { background: #e8effc; }
.button { background: #367af6; color: #fff; text-align: center; }
.save { margin: 57px 0 42px; }
p { margin: 0 0 79px; line-height: 37px; }
table { width: 1200px; margin-top: 47px; border-collapse: separate; border-spacing: 0; table-layout: fixed; }
th, td { height: 71px; padding: 0 16px; text-align: left; line-height: 37px; border-bottom: 2px solid #ddd; }
th { background: #f1f1f1; }

/* screenshot preview window */
.preview {
  position: absolute;
  left: 432px;
  top: 1730px;
  width: 2620px;
  height: 260px;
  border-radius: 24px 0 0 0;
  border: 2px solid #6b6b66;
  background:
    radial-gradient(circle at 2300px 30px, #54453a 0, transparent 220px),
    linear-gradient(#464742, #343431 60px, #252624 150px, #1e201f);
  box-shadow: 0 0 0 1px #111, 0 36px 110px rgba(0, 0, 0, .45);
}
.preview-head {
  display: grid;
  grid-template-columns: 44px 2288px 86px 85px 30px;
  padding: 22px 0 0 32px;
  height: 76px;
  color: #d6d6d2;
}
.preview-head b { font-size: 27px; line-height: 36px; letter-spacing: -.3px; }
.shot { width: 2468px; height: 190px; padding: 55px 3px 0 254px; background: linear-gradient(90deg, #1f291f 700px, #3b402a); border-right: 2px solid #4d4e48; }
.shot-window { height: 140px; padding-top: 61px; background: #202220; border-radius: 0 18px 0 0; border-top: 2px solid #77787a; border-right: 2px solid #66676a; }
.shot-bar {
  height: 80px;
  display: flex;
  align-items: flex-start;
  background: #3b3b3b;
  border-radius: 0 14px 0 0;
  padding: 22px 0 0 22px;
  gap: 30px;
  color: #c7c7c7;
}
.shot-bar .dim { color: #7d7d7d; }
.shot-omni { width: 1402px; height: 50px; flex: none; margin: -14px 9px 0 -4px; padding: 0 11px 0 8px; border-radius: 25px; background: #282828; display: flex; align-items: center; color: #e0e0e0; font-size: 21px; }
.shot-omni span { flex: 1; margin-left: 12px; letter-spacing: -.26px; white-space: nowrap; }
.tune { width: 42px; height: 36px; flex: none; border-radius: 18px; background: #3b3b3b; display: grid; place-items: center; }
.shot-bar .vsep { margin-left: -4px; margin-right: -4px; height: 24px; flex: none; }
.shot-bar .avatar { width: 30px; height: 30px; margin: -4px 0 0 -6px; line-height: 30px; font-size: 17px; flex: none; }
.shot-bar .update { width: 258px; height: 50px; margin: -13px 0 0 -12px; padding: 0 20px 0 18px; font-size: 19px; flex: none; }

/* dock */
.dock {
  position: absolute;
  left: 145px;
  top: 1770px;
  width: 2735px;
  height: 184px;
  display: flex;
  padding: 23px 0 0 22px;
  border: 2px solid #54564f;
  border-radius: 54px;
  background:
    linear-gradient(rgba(50, 52, 40, .25), rgba(30, 30, 40, .25)),
    linear-gradient(90deg, #1f2a27, #2a3027 14%, #39392f 22%, #353530 45%, #36382f 60%, #383830 85%, #31342f);
  box-shadow: 0 0 0 1px #111;
}
.app-icon { position: relative; width: 124px; height: 124px; margin-right: 37.200px; flex: none; }
.app-icon > svg { width: 124px; height: 124px; border-radius: 29px; box-shadow: 0 2px 5px rgba(0, 0, 0, .35); }
.run::after {
  content: "";
  position: absolute;
  left: 57px;
  bottom: -31px;
  width: 8px;
  height: 8px;
  border-radius: 50%;
  background: #a5a8a4;
}
.badge {
  position: absolute;
  left: 81px;
  top: -15px;
  width: 60px;
  height: 60px;
  border-radius: 50%;
  background: #e04f3f;
  color: #fff;
  font-size: 33px;
  font-weight: 400;
  line-height: 60px;
  text-align: center;
}
.divider { width: 2px; height: 136px; margin-top: -1px; flex: none; background: #6c6c67; }
.d1 { margin-left: 17px; margin-right: 55px; }
.d2 { margin-left: 17px; margin-right: 63px; }
.docx { margin-top: -5px; }
.trash { margin: -12px 0 0 55px; }
.wletter { font: 700 36px "Liberation Sans", sans-serif; fill: #fff; }
.docx-label { font: 20px Inter, sans-serif; fill: #666; }
```
